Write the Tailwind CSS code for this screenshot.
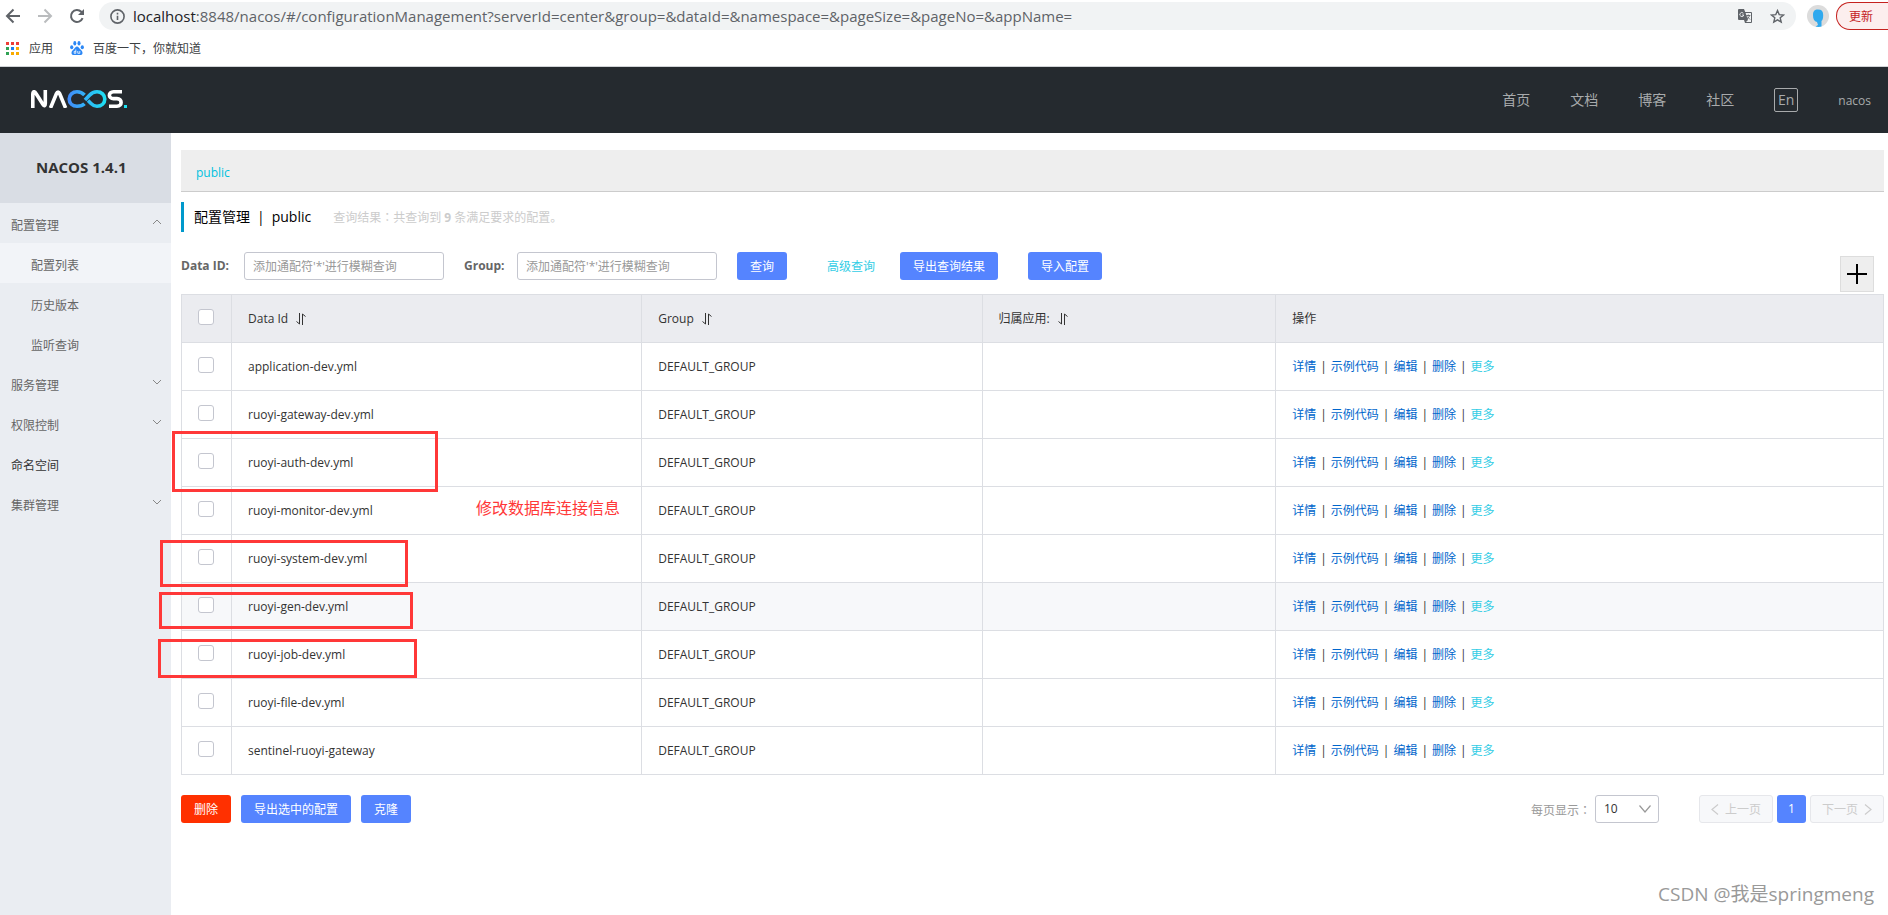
<!DOCTYPE html>
<html lang="zh-CN">
<head>
<meta charset="utf-8">
<title>Nacos</title>
<script src="https://cdn.jsdelivr.net/npm/@tailwindcss/browser@4"></script>
</head>
<body class="relative flex min-h-screen flex-col overflow-x-hidden bg-white font-['Open_Sans','Noto_Sans_CJK_SC',sans-serif] text-xs text-[#333]">

<!-- Browser toolbar -->
<div class="flex h-[66px] flex-col border-b border-[#d0d3d6] box-content">
  <div class="flex h-8 items-center overflow-hidden pl-[5px]">
    <button aria-label="后退" class="mr-4 text-[#5f6368]"><svg class="size-4" viewBox="0 0 16 16" fill="none" stroke="currentColor" stroke-width="2"><path d="M15 8H2.5M8.5 1.5L2 8l6.500 6.500"/></svg></button>
    <button aria-label="前进" class="mr-4 text-[#babcbe]"><svg class="size-4" viewBox="0 0 16 16" fill="none" stroke="currentColor" stroke-width="2"><path d="M1 8h12.500M7.500 1.500L14 8l-6.500 6.500"/></svg></button>
    <button aria-label="重新加载" class="mr-[14px] text-[#5f6368]"><svg class="size-4" viewBox="0 0 16 16" fill="none"><path d="M13.600 10.200A6 6 0 1 1 12.300 3.800L14 5.500" stroke="currentColor" stroke-width="2"/><path d="M15 1v6H9z" fill="currentColor"/></svg></button>
    <div class="flex h-7 min-w-0 flex-1 items-center rounded-full bg-[#f1f3f4] pr-[11px] pl-[11px]">
      <svg class="mr-2 size-[15px] shrink-0" viewBox="0 0 15 15" fill="none" stroke="#5f6368" stroke-width="1.600"><circle cx="7.500" cy="7.500" r="6.600"/><path d="M7.500 6.800v4.200M7.500 3.800v1.600"/></svg>
      <div class="flex-1 truncate pb-px text-[15px] leading-6 text-[#5f6368]"><span class="text-[#202124]">localhost</span>:8848/nacos/#/configurationManagement?serverId=center&amp;group=&amp;dataId=&amp;namespace=&amp;pageSize=&amp;pageNo=&amp;appName=</div>
      <button aria-label="翻译" class="mr-[18px]"><svg class="size-[14px]" viewBox="0 0 14 14"><path d="M1 0h5l1.200 3H13a1 1 0 0 1 1 1v9a1 1 0 0 1-1 1H7l-1-3H1a1 1 0 0 1-1-1V1a1 1 0 0 1 1-1z" fill="#5f6368"/><path d="M7.600 4H13v9H8l2-2z" fill="#f1f3f4"/><path d="M8.300 6.500h4M10.300 5.500v1M11.600 6.600c-.4 1.500-1.500 2.600-2.600 3.200M9.200 7.500l2.800 3" fill="none" stroke="#5f6368" stroke-width=".9"/><path d="M5.400 4.300A2 2 0 1 0 5.800 6H4" fill="none" stroke="#f1f3f4" stroke-width=".9"/></svg></button>
      <button aria-label="收藏"><svg class="size-[15px]" viewBox="0 0 15 15" fill="none" stroke="#5f6368" stroke-width="1.400"><path d="M7.500 1.600l1.700 4 4.300.4-3.300 2.800 1 4.300-3.700-2.300-3.700 2.300 1-4.300L1.500 6l4.300-.4z"/></svg></button>
    </div>
    <div class="ml-[11px] flex size-[22px] items-center justify-center rounded-full bg-[#dcdcdc]"><svg class="size-[22px]" viewBox="0 0 22 22"><path d="M11 4.500c3.500 0 5.200 1.800 5.200 5.500 0 3.500-.6 5-1.700 6v5.500c-1.700.6-4.300.6-6 0l2.500-1.500-1-3c-2.800-.5-4-3-4-7 0-3.700 1.500-5.500 5-5.500z" fill="#2fa9ee"/></svg></div>
    <button class="ml-[7px] h-7 w-[52px] rounded-l-full border border-r-0 border-[#c5221f] bg-[#fceeee] pt-[2px] pl-3 text-left text-xs text-[#c5221f]">更新</button>
  </div>
  <nav aria-label="书签" class="flex h-8 items-center pl-[6px] text-xs text-[#3c4043]">
    <a href="#" class="flex items-center gap-[10px]"><svg class="size-[13px]" viewBox="0 0 13 13"><path d="M0 0h3v3H0zM5 0h3v3H5zM10 0h3v3h-3z" fill="#ee3e36"/><path d="M0 5h3v3H0zM0 10h3v3H0z" fill="#30a254"/><path d="M5 5h3v3H5z" fill="#1e80f0"/><path d="M10 5h3v3h-3zM5 10h3v3H5zM10 10h3v3h-3z" fill="#f9ab00"/></svg><span class="pt-px">应用</span></a>
    <a href="#" class="ml-[17px] flex items-center gap-[9px]"><svg class="size-[14px]" viewBox="0 0 14 14" fill="#2b87f5"><ellipse cx="1.700" cy="6.200" rx="1.600" ry="2"/><ellipse cx="4.800" cy="2.300" rx="1.500" ry="2.200"/><ellipse cx="9" cy="2.300" rx="1.500" ry="2.200"/><ellipse cx="12.300" cy="6.200" rx="1.600" ry="2"/><path d="M7 5.500c1.500 0 2 1.500 3.200 2.700C11.500 9.400 12.500 10.200 12.500 12c0 1.500-1 2-2.200 2H3.700c-1.200 0-2.200-.5-2.200-2 0-1.800 1-2.600 2.300-3.800C5 7 5.500 5.500 7 5.500z"/><path d="M5.800 8.500v3.800H4.200v-1.900h1.600M7.800 10v2.300h2V10" fill="none" stroke="#fff" stroke-width=".8"/></svg><span class="pt-px">百度一下，你就知道</span></a>
  </nav>
</div>

<!-- Site header -->
<header class="flex h-[66px] items-center bg-[#252a2f] pr-[17px] pl-[31px] text-sm text-[#a8aaac]">
  <a href="#" aria-label="NACOS" class="mb-[2px]">
    <svg class="h-[18px] w-[97px]" viewBox="0 0 97 18" fill="none" stroke-width="3.600">
      <defs><linearGradient id="g" gradientUnits="userSpaceOnUse" x1="36" y1="0" x2="76" y2="0"><stop offset="0" stop-color="#4389fa"/><stop offset="1" stop-color="#1ce3f2"/></linearGradient></defs>
      <path d="M1.800 18V4.500C1.800 1 3.500 1 5 3.500l7 11c1.300 2 2.300 1.500 2.300-1V0M19.500 18l6-14.500c.8-2 2.300-2 3.100 0L34.600 18" stroke="#fff"/>
      <path d="M53.500 13.800C51.700 15.600 49.500 16.200 46 16.200c-4.500 0-7.800-3-7.800-7.200S41.500 1.800 46 1.800c3.500 0 5.500 1 7.500 3.200M57 10.500l3 3c2 2 3.500 2.700 6 2.700 4.500 0 7.800-3 7.800-7.200S70.500 1.800 66 1.800c-3.500 0-5.500 1.200-7.500 3.400L54 10" stroke="url(#g)"/>
      <path d="M91 1.800h-8.500c-5.500 0-5.500 6.800 0 6.800H86c5.500 0 5.500 7.600 0 7.600h-8" stroke="#fff"/>
      <path d="M93 15h3v3h-3z" fill="#1ce3f2"/>
    </svg>
  </a>
  <nav aria-label="主导航" class="ml-auto flex items-center gap-10">
    <a href="#">首页</a><a href="#">文档</a><a href="#">博客</a><a href="#">社区</a>
    <button class="h-6 w-6 rounded-[2px] border border-[#a8aaac] text-sm leading-5">En</button>
    <a href="#" class="pt-[2px] text-xs">nacos</a>
  </nav>
</header>

<div class="flex flex-1">
  <!-- Sidebar -->
  <aside class="w-[171px] shrink-0 bg-[#eaedf2] text-[#666]">
    <div class="flex h-[70px] items-center bg-[#d9dde4] pb-[2px] pl-9 text-[15px] font-bold text-[#333]">NACOS 1.4.1</div>
    <nav aria-label="菜单" class="leading-10">
      <button class="flex h-10 w-full items-center justify-between pt-[6px] pr-[10px] pl-[11px]">配置管理<svg class="mb-2 size-2" viewBox="0 0 8 8" fill="none" stroke="#888"><path d="M0 6l4-4 4 4"/></svg></button>
      <a href="#" class="block h-10 bg-[#f2f4f8] pt-[3px] pl-[31px]">配置列表</a>
      <a href="#" class="block h-10 pt-[3px] pl-[31px]">历史版本</a>
      <a href="#" class="block h-10 pt-[3px] pl-[31px]">监听查询</a>
      <button class="flex h-10 w-full items-center justify-between pt-[6px] pr-[10px] pl-[11px]">服务管理<svg class="mb-2 size-2" viewBox="0 0 8 8" fill="none" stroke="#888"><path d="M0 2l4 4 4-4"/></svg></button>
      <button class="flex h-10 w-full items-center justify-between pt-[6px] pr-[10px] pl-[11px]">权限控制<svg class="mb-2 size-2" viewBox="0 0 8 8" fill="none" stroke="#888"><path d="M0 2l4 4 4-4"/></svg></button>
      <a href="#" class="block h-10 pt-[3px] pl-[11px] text-[#333]">命名空间</a>
      <button class="flex h-10 w-full items-center justify-between pt-[6px] pr-[10px] pl-[11px]">集群管理<svg class="mb-2 size-2" viewBox="0 0 8 8" fill="none" stroke="#888"><path d="M0 2l4 4 4-4"/></svg></button>
    </nav>
  </aside>

  <!-- Content -->
  <main class="min-w-0 flex-1 pt-[17px] pr-1 pl-[10px]">
    <div class="flex h-[42px] items-center border-b border-[#ccc] bg-[#eee] pt-1 pl-[15px]"><a href="#" class="text-[#00c1de]">public</a></div>
    <h1 class="mt-[10px] flex h-[30px] items-center border-l-3 border-[#09c] pl-[10px] text-sm text-black">
      <span>配置管理</span><span class="mx-[7px]">|</span><span>public</span>
      <span class="ml-[22px] text-xs text-[#ccc]">查询结果<span class="font-['Noto_Sans_CJK_TC',sans-serif]" lang="zh-TW">：</span>共查询到 <strong>9</strong> 条满足要求的配置。</span>
    </h1>

    <form class="mt-5 flex items-start" onsubmit="return false">
      <label for="dataId" class="w-[63px] font-bold leading-7 text-[#666]">Data ID:</label>
      <input id="dataId" placeholder="添加通配符'*'进行模糊查询" class="h-7 w-[200px] rounded-[3px] border border-[#c4c6cf] px-2 placeholder:text-[#999]">
      <label for="group" class="ml-5 w-[53px] font-bold leading-7 text-[#666]">Group:</label>
      <input id="group" placeholder="添加通配符'*'进行模糊查询" class="h-7 w-[200px] rounded-[3px] border border-[#c4c6cf] px-2 placeholder:text-[#999]">
      <button class="ml-5 h-7 w-[50px] rounded-[3px] bg-[#5584ff] pt-[2px] text-white">查询</button>
      <a href="#" class="ml-10 pt-px leading-7 text-[#33cde5]">高级查询</a>
      <button class="ml-[25px] h-7 rounded-[3px] bg-[#5584ff] px-[13px] pt-[2px] text-white">导出查询结果</button>
      <button class="ml-[30px] h-7 rounded-[3px] bg-[#5584ff] px-[13px] pt-[2px] text-white">导入配置</button>
      <button aria-label="新建配置" class="mt-1 mr-[10px] ml-auto flex h-9 w-[34px] items-center justify-center border border-[#ddd] bg-[#eee]"><svg class="size-5" viewBox="0 0 20 20" stroke="#000" stroke-width="2"><path d="M0 10h20M10 0v20"/></svg></button>
    </form>

    <table class="mt-[2px] w-full table-fixed border-collapse border border-[#dcdee3] text-left">
      <colgroup><col class="w-[50px]"><col class="w-[24.100%]"><col class="w-[20%]"><col class="w-[17.250%]"><col></colgroup>
      <thead class="bg-[#ebecf0]">
        <tr class="h-12">
          <th class="border border-[#dcdee3] pr-[2px] text-center"><input type="checkbox" aria-label="全选" class="size-4 appearance-none rounded-[3px] border border-[#c4c6cf] bg-white"></th>
          <th class="border border-[#dcdee3] px-4 font-normal">Data Id <button aria-label="按 Data Id 排序" class="ml-[5px] align-middle"><svg class="mb-px h-3 w-[10px]" viewBox="0 0 10 12" fill="none" stroke="#333"><path d="M0.500 8.500L3.500 11V0M6.500 12V1L9.500 3.500"/></svg></button></th>
          <th class="border border-[#dcdee3] px-4 font-normal">Group <button aria-label="按 Group 排序" class="ml-[5px] align-middle"><svg class="mb-px h-3 w-[10px]" viewBox="0 0 10 12" fill="none" stroke="#333"><path d="M0.500 8.500L3.500 11V0M6.500 12V1L9.500 3.500"/></svg></button></th>
          <th class="border border-[#dcdee3] px-4 font-normal">归属应用: <button aria-label="按归属应用排序" class="ml-[5px] align-middle"><svg class="mb-px h-3 w-[10px]" viewBox="0 0 10 12" fill="none" stroke="#333"><path d="M0.500 8.500L3.500 11V0M6.500 12V1L9.500 3.500"/></svg></button></th>
          <th class="border border-[#dcdee3] px-4 font-normal">操作</th>
        </tr>
      </thead>
      <tbody id="rows"></tbody>
    </table>

    <div class="mt-5 flex items-center">
      <button class="h-7 w-[50px] rounded-[3px] bg-[#ff3000] pt-[2px] text-white">删除</button>
      <button class="ml-[10px] h-7 rounded-[3px] bg-[#5584ff] px-[13px] pt-[2px] text-white">导出选中的配置</button>
      <button class="ml-[10px] h-7 w-[50px] rounded-[3px] bg-[#5584ff] pt-[2px] text-white">克隆</button>
      <label for="size" class="mr-1 ml-auto pt-[2px] text-[#999]">每页显示<span class="font-['Noto_Sans_CJK_TC',sans-serif]" lang="zh-TW">：</span></label>
      <div class="relative mr-10">
        <select id="size" class="block h-7 w-16 appearance-none rounded-[3px] border border-[#c4c6cf] bg-white px-2 text-[#333]"><option>10</option></select>
        <svg class="pointer-events-none absolute top-[10px] right-2 h-2 w-3" viewBox="0 0 12 8" fill="none" stroke="#999" stroke-width="1.200"><path d="M0.500 0.500L6 7l5.500-6.500"/></svg>
      </div>
      <nav aria-label="分页" class="flex gap-1">
        <button disabled class="flex h-7 w-[74px] items-center justify-center gap-[6px] rounded-[3px] border border-[#e6e7eb] bg-[#f7f8fa] text-[#ccc]"><svg class="h-[11px] w-2" viewBox="0 0 8 11" fill="none" stroke="currentColor" stroke-width="1.200"><path d="M7 0.500L1 5.500l6 5"/></svg><span class="pt-px">上一页</span></button>
        <button class="h-7 w-[29px] rounded-[3px] bg-[#5584ff] text-white">1</button>
        <button disabled class="flex h-7 w-[74px] items-center justify-center gap-[6px] rounded-[3px] border border-[#e6e7eb] bg-[#f7f8fa] text-[#ccc]"><span class="pt-px">下一页</span><svg class="h-[11px] w-2" viewBox="0 0 8 11" fill="none" stroke="currentColor" stroke-width="1.200"><path d="M1 0.500l6 5-6 5"/></svg></button>
      </nav>
    </div>
  </main>
</div>

<!-- Annotations drawn over the page -->
<div class="pointer-events-none absolute top-[431px] left-[172px] h-[61px] w-[266px] border-3 border-[#ff3838]"></div>
<div class="pointer-events-none absolute top-[540px] left-[160px] h-[47px] w-[248px] border-3 border-[#ff3838]"></div>
<div class="pointer-events-none absolute top-[592px] left-[159px] h-[37px] w-[254px] border-3 border-[#ff3838]"></div>
<div class="pointer-events-none absolute top-[639px] left-[158px] h-[39px] w-[259px] border-3 border-[#ff3838]"></div>
<p class="pointer-events-none absolute top-[496px] left-[476px] text-base text-[#ff3838]">修改数据库连接信息</p>
<p class="pointer-events-none absolute top-[880px] right-[14px] text-[19px] leading-7 text-[#999]">CSDN @我是springmeng</p>

<script>
  const names = ['application-dev.yml', 'ruoyi-gateway-dev.yml', 'ruoyi-auth-dev.yml', 'ruoyi-monitor-dev.yml', 'ruoyi-system-dev.yml', 'ruoyi-gen-dev.yml', 'ruoyi-job-dev.yml', 'ruoyi-file-dev.yml', 'sentinel-ruoyi-gateway'];
  const hovered = 'ruoyi-gen-dev.yml';
  const sep = '<span class="mx-1">|</span>';
  document.getElementById('rows').innerHTML = names.map(n => `
    <tr class="${n === hovered ? 'h-12 bg-[#f7f8fa]' : 'h-12'}">
      <td class="border border-[#dcdee3] pr-[2px] text-center"><input type="checkbox" aria-label="${n}" class="size-4 appearance-none rounded-[3px] border border-[#c4c6cf] bg-white"></td>
      <td class="border border-[#dcdee3] px-4">${n}</td>
      <td class="border border-[#dcdee3] px-4">DEFAULT_GROUP</td>
      <td class="border border-[#dcdee3] px-4"></td>
      <td class="border border-[#dcdee3] px-4 text-[#333]"><a href="#" class="text-[#06c]">详情</a>${sep}<a href="#" class="text-[#06c]">示例代码</a>${sep}<a href="#" class="text-[#06c]">编辑</a>${sep}<a href="#" class="text-[#06c]">删除</a>${sep}<a href="#" class="text-[#33cde5]">更多</a></td>
    </tr>`).join('');
</script>
</body>
</html>
